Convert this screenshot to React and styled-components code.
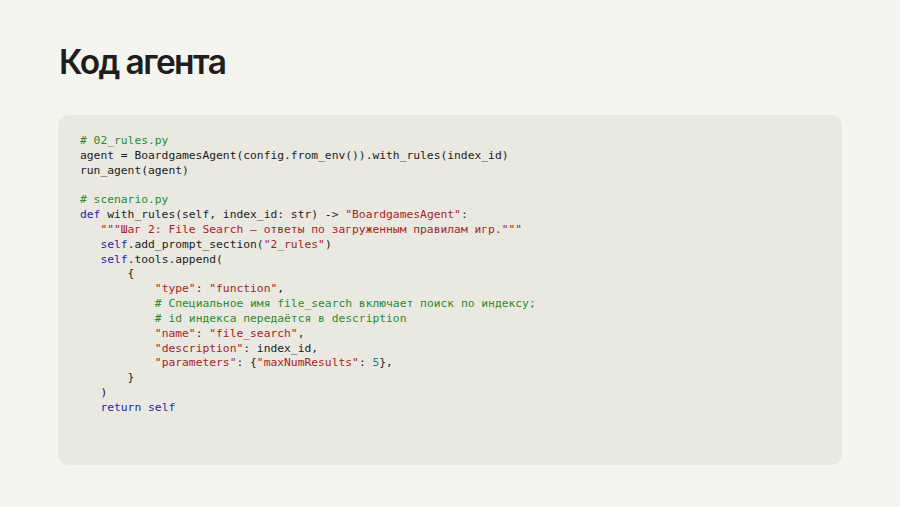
import React from "react";
import styled, { createGlobalStyle } from "styled-components";

const Global = createGlobalStyle`
  html, body { margin: 0; padding: 0; background: #f5f5f0; }
  body { width: 900px; height: 507px; overflow: hidden; }
`;

const Page = styled.div`
  width: 900px;
  height: 507px;
  box-sizing: border-box;
  padding: 41px 58px 0 58px;
  display: flex;
  flex-direction: column;
  background: #f5f5f0;
`;

const Title = styled.h1`
  margin: 0 0 0 1px;
  font-family: Inter, "Open Sans", sans-serif;
  font-weight: 600;
  font-size: 33.5px;
  line-height: 42px;
  letter-spacing: -1.6px;
  color: #1e1e1e;
`;

const Card = styled.div`
  margin-top: 32px;
  height: 350px;
  box-sizing: border-box;
  background: #e9e9e1;
  border-radius: 11px;
  padding: 19px 22px;
`;

const Code = styled.pre`
  margin: 0;
  font-family: "DejaVu Sans Mono", "Liberation Mono", monospace;
  font-size: 11.3px;
  line-height: 14.83px;
  color: #1c1c1c;
  white-space: pre;
`;

const colors = {
  t: "#1c1c1c",
  c: "#2f8a2f",
  s: "#a8231f",
  k: "#1f1fb0",
  n: "#1a7f6a",
};

const Tok = styled.span`
  color: ${(p) => colors[p.$k]};
`;

const lines = [
  [["c", "# 02_rules.py"]],
  [["t", "agent = BoardgamesAgent(config.from_env()).with_rules(index_id)"]],
  [["t", "run_agent(agent)"]],
  [],
  [["c", "# scenario.py"]],
  [["k", "def"], ["t", " with_rules(self, index_id: str) -> "], ["s", "\"BoardgamesAgent\""], ["t", ":"]],
  [["t", "   "], ["s", "\"\"\"Шаг 2: File Search — ответы по загруженным правилам игр.\"\"\""]],
  [["t", "   "], ["k", "self"], ["t", ".add_prompt_section("], ["s", "\"2_rules\""], ["t", ")"]],
  [["t", "   "], ["k", "self"], ["t", ".tools.append("]],
  [["t", "       {"]],
  [["t", "           "], ["s", "\"type\""], ["t", ": "], ["s", "\"function\""], ["t", ","]],
  [["t", "           "], ["c", "# Специальное имя file_search включает поиск по индексу;"]],
  [["t", "           "], ["c", "# id индекса передаётся в description"]],
  [["t", "           "], ["s", "\"name\""], ["t", ": "], ["s", "\"file_search\""], ["t", ","]],
  [["t", "           "], ["s", "\"description\""], ["t", ": index_id,"]],
  [["t", "           "], ["s", "\"parameters\""], ["t", ": {"], ["s", "\"maxNumResults\""], ["t", ": "], ["n", "5"], ["t", "},"]],
  [["t", "       }"]],
  [["t", "   )"]],
  [["t", "   "], ["k", "return"], ["t", " "], ["k", "self"]],
];

export default function App() {
  return (
    <>
      <Global />
      <Page>
        <Title>Код агента</Title>
        <Card>
          <Code>
            {lines.map((ln, i) => (
              <React.Fragment key={i}>
                {ln.map(([k, txt], j) => (
                  <Tok key={j} $k={k}>{txt}</Tok>
                ))}
                {"\n"}
              </React.Fragment>
            ))}
          </Code>
        </Card>
      </Page>
    </>
  );
}
